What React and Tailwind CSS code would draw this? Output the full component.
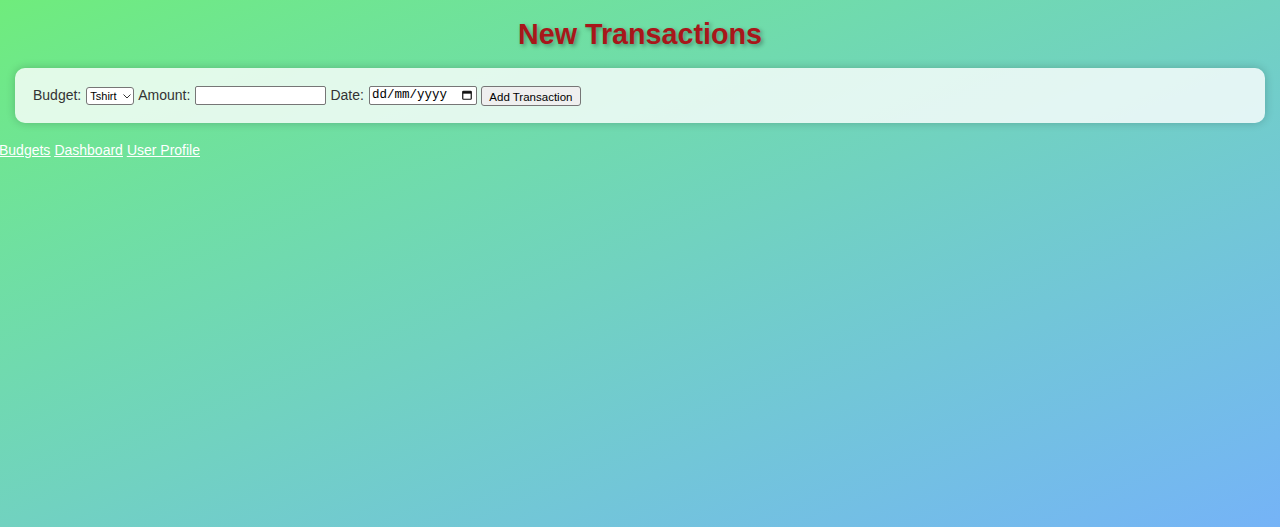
import { useState } from "react";

const budgets = ["Tshirt", "Food", "Rent"];

function Chevron() {
  return (
    <svg viewBox="0 0 8 5" className="pointer-events-none absolute right-[3px] top-[7px] h-[5px] w-[8px]">
      <path d="M0.5 0.5 L4 4 L7.5 0.5" fill="none" stroke="#333" strokeWidth="1" />
    </svg>
  );
}

function CalendarIcon() {
  return (
    <svg viewBox="0 0 10 10" className="pointer-events-none absolute right-[5px] top-[4px] h-[10px] w-[10px]">
      <rect x="0.75" y="1.25" width="8.5" height="8" rx="0.8" fill="none" stroke="#111" strokeWidth="1.2" />
      <rect x="0.75" y="1.25" width="8.5" height="2.4" fill="#111" />
    </svg>
  );
}

export default function App() {
  const [budget, setBudget] = useState("Tshirt");
  const [amount, setAmount] = useState("");
  const [date, setDate] = useState("");

  return (
    <div className="min-h-screen w-full bg-linear-to-br from-[#6fec7c] via-[#71d2c0] to-[#75b3f7] font-['Liberation_Sans',Arial,sans-serif] text-[#333] text-sm">
      <h1 className="pt-[16px] pb-[16px] text-center text-[28.7px] leading-[36px] font-bold text-[#a8161a] [text-shadow:2px_2px_4px_rgba(0,0,0,0.35)]">
        New Transactions
      </h1>

      <div className="mx-[15px] rounded-[10px] bg-white/80 px-[18px] py-[17px] shadow-[0_0_10px_rgba(0,0,0,0.2)]">
        <form className="flex items-center gap-[4px] leading-[21px]">
          <label className="flex items-center gap-[5px]">
            Budget:
            <span className="relative">
              <select
                value={budget}
                onChange={(e) => setBudget(e.target.value)}
                className="block h-[18px] w-[48px] appearance-none rounded-[3px] border border-[#767676] bg-white pl-[3px] text-[11px] leading-[16px] text-black"
              >
                {budgets.map((b) => (
                  <option key={b}>{b}</option>
                ))}
              </select>
              <Chevron />
            </span>
          </label>
          <label className="flex items-center gap-[5px]">
            Amount:
            <input
              type="text"
              value={amount}
              onChange={(e) => setAmount(e.target.value)}
              className="h-[19px] w-[131px] rounded-[2px] border border-[#767676] bg-white px-[2px] text-[13px] text-black"
            />
          </label>
          <label className="flex items-center gap-[5px]">
            Date:
            <span className="relative">
              <input
                type="text"
                value={date}
                placeholder="dd/mm/yyyy"
                onChange={(e) => setDate(e.target.value)}
                className="block h-[19px] w-[108px] rounded-[2px] border border-[#767676] bg-white px-[2px] font-['Liberation_Mono',monospace] text-[12.5px] text-black placeholder:text-black"
              />
              <CalendarIcon />
            </span>
          </label>
          <button
            type="button"
            className="h-[20px] w-[100px] rounded-[3px] border border-[#767676] bg-[#efefef] text-[11.5px] text-black"
          >
            Add Transaction
          </button>
        </form>
      </div>

      <nav className="-ml-px mt-[18px] flex gap-[4px] text-white underline leading-[18px]">
        <a href="#budgets">Budgets</a>
        <a href="#dashboard">Dashboard</a>
        <a href="#profile">User Profile</a>
      </nav>
    </div>
  );
}
